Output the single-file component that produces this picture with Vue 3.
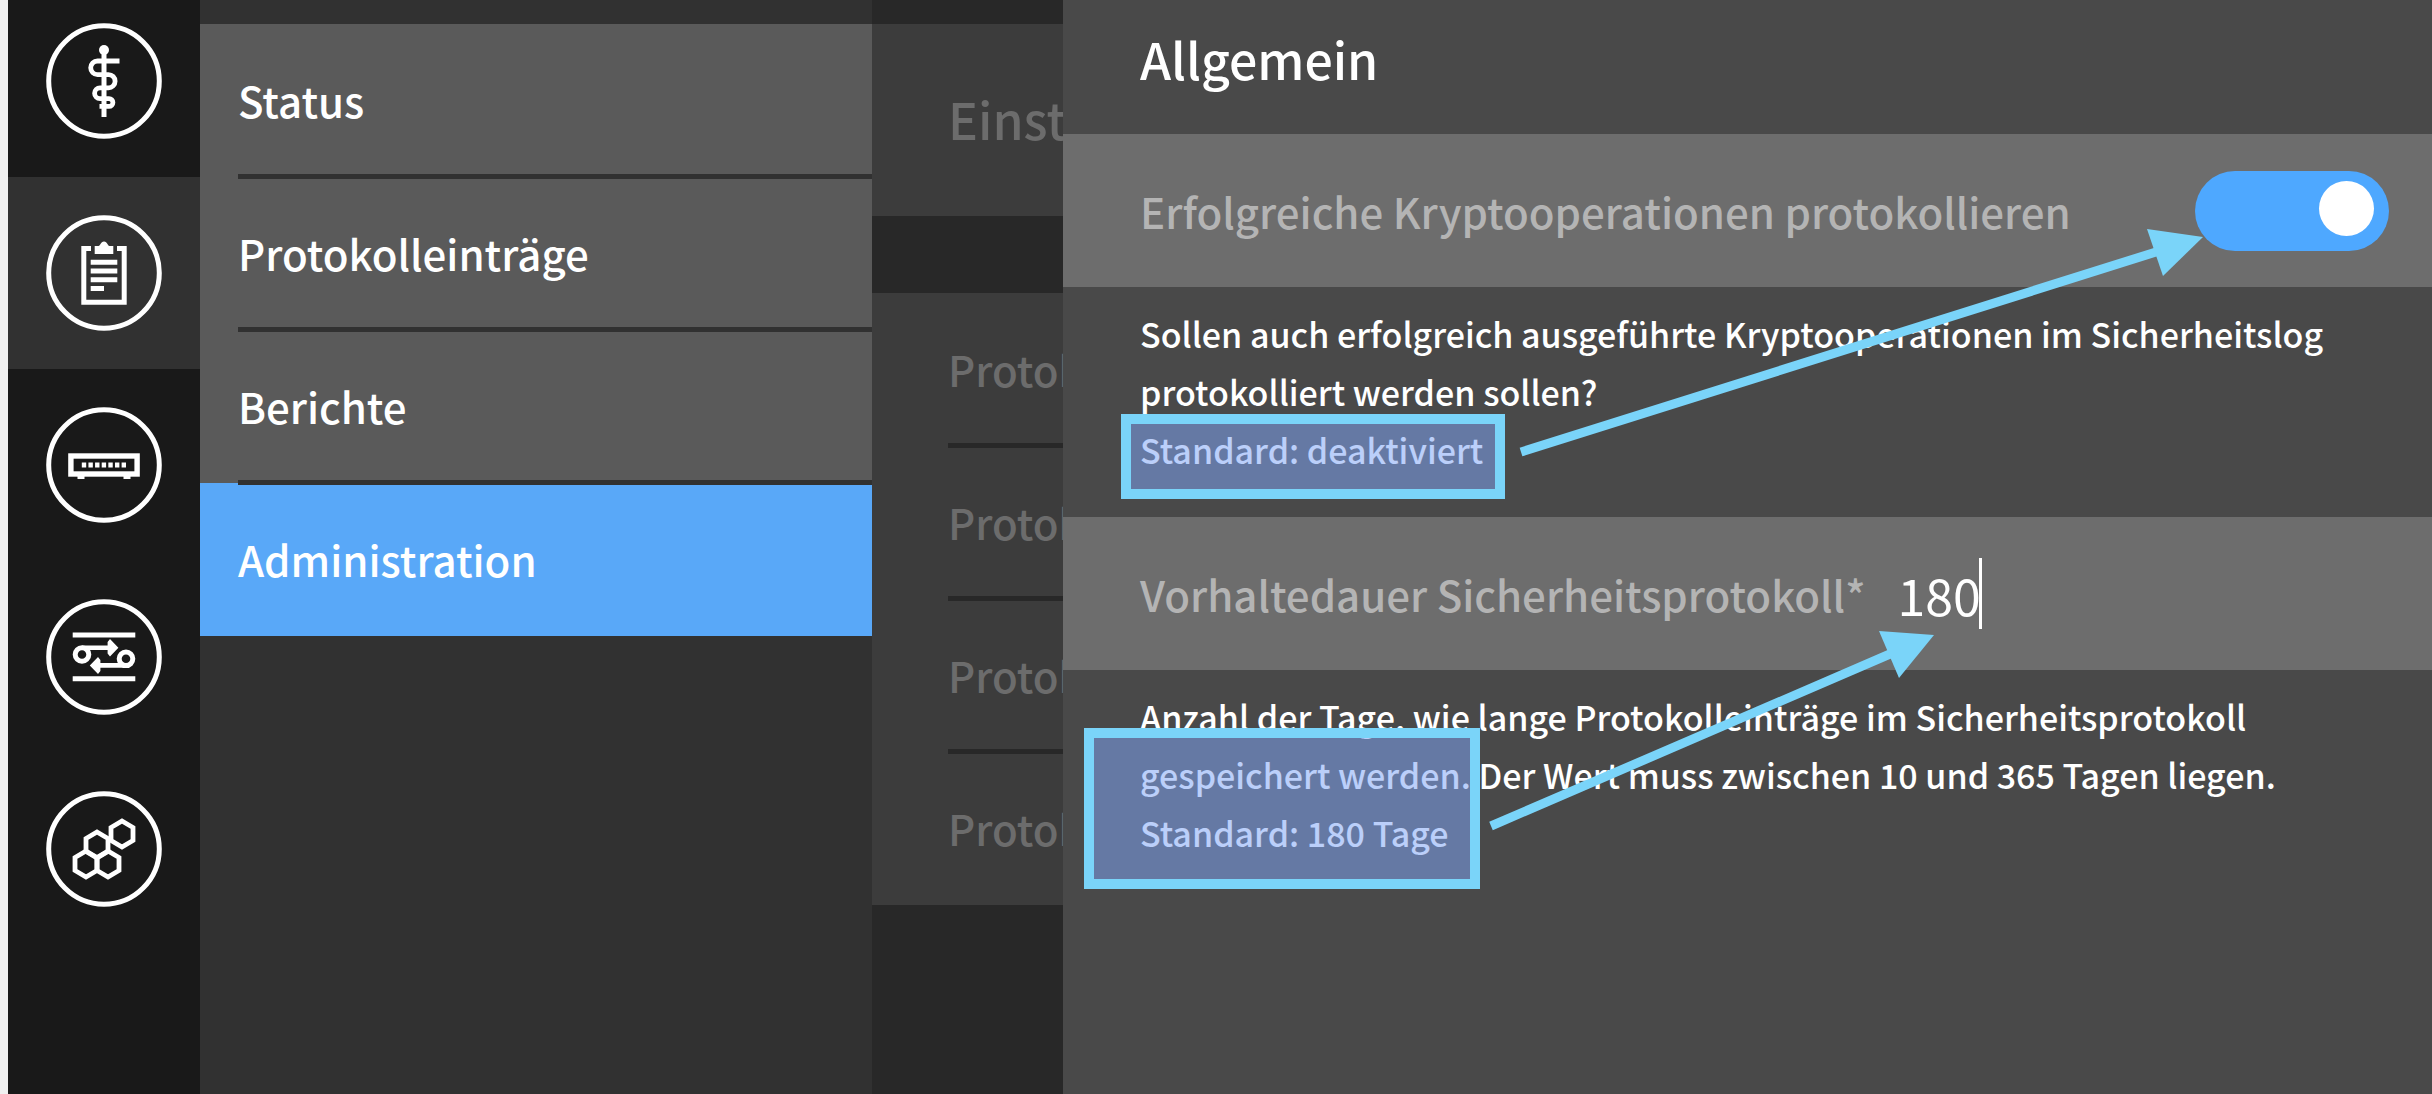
<script setup>
import { ref } from 'vue'

const railItems = ['Praxis', 'Diagnose', 'System', 'Netzwerk', 'Module']
const activeRail = ref(1)

const menu = ['Status', 'Protokolleinträge', 'Berichte', 'Administration']
const activeMenu = ref(3)

const settings = ['Protok', 'Protok', 'Protok', 'Protok']

const logCrypto = ref(true)
const retention = ref('180')

const hexagons = [[18, -15], [-7, -4], [-18, 15], [4, 15]]
const hexPoints = ([x, y]) =>
  [[0, -13], [11, -6.5], [11, 6.5], [0, 13], [-11, 6.5], [-11, -6.5]]
    .map(([dx, dy]) => `${x + dx},${y + dy}`)
    .join(' ')
</script>

<template>
  <div class="app">
    <div class="edge"></div>

    <nav class="rail" aria-label="Bereiche">
      <button
        v-for="(name, i) in railItems"
        :key="name"
        type="button"
        class="rail-item"
        :class="{ active: i === activeRail }"
        :aria-label="name"
        @click="activeRail = i"
      >
        <svg class="icon" viewBox="-58 -58 116 116" aria-hidden="true">
          <circle r="55.3" />
          <g v-if="i === 0">
            <circle class="solid" cy="-31" r="5" />
            <path d="M0 -31V36" />
            <path d="M15.5 -20H-6.5a6.8 6.8 0 0 0 0 13.6H4.5a6.6 6.6 0 0 1 0 13.2H-4a5.4 5.4 0 0 0 0 10.8H5a3.8 3.8 0 0 1 0 7.8H-4.5" stroke-width="4.8" />
          </g>
          <g v-else-if="i === 1">
            <path d="M-13 -24.5H-20.2V29.2H20.2V-24.5H13" />
            <path class="solid" d="M-9.3 -19V-27H-5.5C-3.5 -27 -3.5 -31.4 0 -31.4S3.5 -27 5.5 -27H9.3V-19Z" />
            <path d="M-13.3 -10.7H13.3M-13.3 -2H13.3M-13.3 6.8H13.3M-13.3 15.4H0" />
          </g>
          <g v-else-if="i === 2">
            <rect x="-33.1" y="-9" width="66.2" height="18" stroke-width="5.4" />
            <path d="M-26.5 12H-19.5M19.5 12H26.5" stroke-width="4" />
            <path d="M-22.2 0H22.2" stroke-width="5" stroke-dasharray="4.4 2.235" />
          </g>
          <g v-else-if="i === 3">
            <path d="M-31.3 -22H31.3M-31.3 21.7H31.3" />
            <circle cx="-22" cy="-2.5" r="6.8" />
            <circle cx="22" cy="1.8" r="6.8" />
            <path d="M-22 -9.3H6M22 8.4H-6" stroke-width="4.6" />
            <path class="solid" d="M14.4 -9.3L6 -18L3.6 -15V-3.6L6 -0.5ZM-14.2 8.4L-6 0L-3.6 3V14L-6 17Z" />
          </g>
          <g v-else>
            <polygon v-for="(h, k) in hexagons" :key="k" :points="hexPoints(h)" stroke-width="4.8" />
          </g>
        </svg>
      </button>
    </nav>

    <nav class="submenu" aria-label="Diagnose">
      <a
        v-for="(label, i) in menu"
        :key="label"
        href="#"
        class="submenu-item"
        :class="{ active: i === activeMenu }"
        @click.prevent="activeMenu = i"
      >{{ label }}</a>
    </nav>

    <section class="settings">
      <h2 class="settings-head">Einst</h2>
      <ul class="settings-list">
        <li v-for="(label, i) in settings" :key="i" class="settings-item">{{ label }}</li>
      </ul>
    </section>

    <main class="panel">
      <h1 class="panel-title">Allgemein</h1>

      <div class="row">
        <label for="log-crypto">Erfolgreiche Kryptooperationen protokollieren</label>
        <input id="log-crypto" v-model="logCrypto" class="switch" type="checkbox" role="switch" />
      </div>
      <div class="hint">
        Sollen auch erfolgreich ausgeführte Kryptooperationen im Sicherheitslog<br />
        protokolliert werden sollen?<br />
        Standard: deaktiviert
        <span class="marker marker-switch"></span>
      </div>

      <div class="row">
        <label for="retention">Vorhaltedauer Sicherheitsprotokoll*</label>
        <span class="field">
          <input id="retention" v-model="retention" class="number" type="text" inputmode="numeric" />
        </span>
      </div>
      <div class="hint">
        Anzahl der Tage, wie lange Protokolleinträge im Sicherheitsprotokoll<br />
        gespeichert werden. Der Wert muss zwischen 10 und 365 Tagen liegen.<br />
        Standard: 180 Tage
        <span class="marker marker-days"></span>
      </div>

      <svg class="arrows" width="1369" height="900" viewBox="0 0 1369 900" aria-hidden="true">
        <path d="M458 452L1093 252M428 826L827 654" />
        <polygon points="1140,237 1084,229 1100,276" />
        <polygon points="871,635 816,631 836,678" />
      </svg>
    </main>
  </div>
</template>

<style>
body {
  margin: 0;
  background: #282828;
}
</style>

<style scoped>
.app {
  display: grid;
  grid-template-columns: 8px 192px minmax(0, 672fr) minmax(0, 191fr) minmax(0, 1369fr);
  min-height: 100vh;
  overflow: hidden;
  font-family: "Noto Sans CJK SC", "Noto Sans", sans-serif;
  font-size: 42px;
  font-weight: 500;
  color: #fff;
}

.edge {
  background: #f0f0f0;
}

.rail {
  display: flex;
  flex-direction: column;
  background: #191919;
}

.rail-item {
  display: flex;
  align-items: center;
  justify-content: center;
  height: 192px;
  padding: 0;
  border: 0;
  background: none;
  cursor: pointer;
}

.rail-item:first-child {
  margin-top: -15px;
}

.rail-item.active {
  background: #313131;
}

.icon {
  width: 116px;
  height: 116px;
  fill: none;
  stroke: #fff;
  stroke-width: 5;
}

.icon .solid {
  fill: #fff;
  stroke: none;
}

.submenu {
  display: flex;
  flex-direction: column;
  padding-top: 24px;
  background: #313131;
}

.submenu-item {
  position: relative;
  display: flex;
  align-items: center;
  box-sizing: border-box;
  height: 153px;
  padding: 0 38px 2px;
  background: #5a5a5a;
  color: #fff;
  text-decoration: none;
}

.submenu-item:not(:last-child)::after {
  content: "";
  position: absolute;
  z-index: 1;
  left: 38px;
  right: 0;
  bottom: -2px;
  height: 5px;
  background: #313131;
}

.submenu-item.active {
  background: #59a8f8;
}

.settings {
  padding-top: 24px;
  overflow: hidden;
  background: #282828;
  color: #6c6c6c;
  white-space: nowrap;
}

.settings-head {
  display: flex;
  align-items: center;
  box-sizing: border-box;
  height: 192px;
  margin: 0 0 77px;
  padding: 0 0 4px 76px;
  background: #3c3c3c;
  font-size: 50px;
  font-weight: 500;
}

.settings-list {
  margin: 0;
  padding: 0;
  list-style: none;
}

.settings-item {
  position: relative;
  display: flex;
  align-items: center;
  box-sizing: border-box;
  height: 153px;
  padding: 0 0 2px 76px;
  background: #3c3c3c;
}

.settings-item:not(:last-child)::after {
  content: "";
  position: absolute;
  z-index: 1;
  left: 76px;
  right: 0;
  bottom: -2px;
  height: 5px;
  background: #282828;
}

.panel {
  position: relative;
  background: #494949;
}

.panel-title {
  display: flex;
  align-items: center;
  box-sizing: border-box;
  height: 134px;
  margin: 0;
  padding: 0 77px 18px;
  font-size: 50px;
  font-weight: 500;
}

.row {
  display: flex;
  align-items: center;
  box-sizing: border-box;
  height: 153px;
  padding: 0 43px 0 77px;
  background: #6d6d6d;
  color: #b4b4b4;
  white-space: nowrap;
}

.switch {
  appearance: none;
  width: 194px;
  height: 80px;
  margin: 0 0 0 auto;
  padding: 10px 15px;
  box-sizing: border-box;
  display: flex;
  justify-content: flex-start;
  border-radius: 40px;
  background: #8a8a8a;
  cursor: pointer;
}

.switch:checked {
  justify-content: flex-end;
  background: #4ea8ff;
}

.switch::before {
  content: "";
  width: 55px;
  height: 55px;
  border-radius: 50%;
  background: #fff;
}

.field {
  display: flex;
  margin-left: 32px;
  border-right: 3px solid #fff;
}

.number {
  width: 82px;
  height: 71px;
  padding: 0;
  border: 0;
  outline: 0;
  background: none;
  color: #fff;
  font: inherit;
  font-size: 50px;
  font-weight: 400;
}

.hint {
  position: relative;
  box-sizing: border-box;
  min-height: 230px;
  padding: 18px 43px 38px 77px;
  font-size: 34px;
  line-height: 58px;
  white-space: nowrap;
}

.marker {
  position: absolute;
  box-sizing: border-box;
  border: 10px solid #7ad4f9;
  background: rgba(127, 165, 246, 0.53);
  background-clip: padding-box;
}

.marker-switch {
  top: 127px;
  left: 58px;
  width: 384px;
  height: 85px;
}

.marker-days {
  top: 58px;
  left: 21px;
  width: 396px;
  height: 161px;
}

.arrows {
  position: absolute;
  top: 0;
  left: 0;
  fill: #7ad4f9;
  stroke: none;
  pointer-events: none;
}

.arrows path {
  stroke: #7ad4f9;
  stroke-width: 9;
}
</style>
